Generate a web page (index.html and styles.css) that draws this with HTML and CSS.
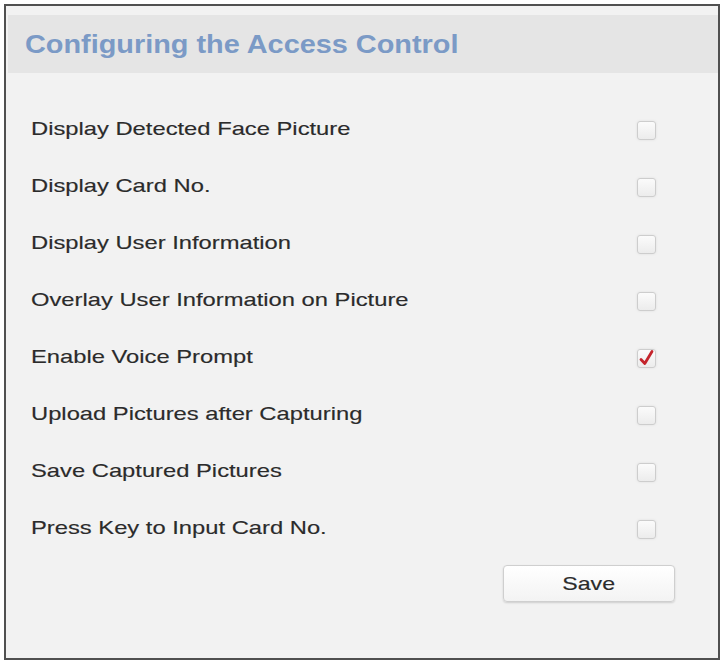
FILE: index.html
```html
<!DOCTYPE html>
<html lang="en">
<head>
    <meta charset="UTF-8">
    <meta name="viewport" content="width=device-width, initial-scale=1.0">
    <title>Configuring the Access Control</title>
    <link rel="stylesheet" href="styles.css">
</head>
<body>
    <div class="panel">
        <div class="panel-header">
            <h2>Configuring the Access Control</h2>
        </div>
        <ul class="options">
            <li class="option">
                <span class="option-label">Display Detected Face Picture</span>
                <span class="check"></span>
            </li>
            <li class="option">
                <span class="option-label">Display Card No.</span>
                <span class="check"></span>
            </li>
            <li class="option">
                <span class="option-label">Display User Information</span>
                <span class="check"></span>
            </li>
            <li class="option">
                <span class="option-label">Overlay User Information on Picture</span>
                <span class="check"></span>
            </li>
            <li class="option">
                <span class="option-label">Enable Voice Prompt</span>
                <span class="check checked">
                    <svg viewBox="0 0 19 19" width="19" height="19">
                        <path d="M4 10.5 L7.8 14.5 L15 2.5" fill="none" stroke="#c4242c" stroke-width="2.8" stroke-linecap="round" stroke-linejoin="round"/>
                    </svg>
                </span>
            </li>
            <li class="option">
                <span class="option-label">Upload Pictures after Capturing</span>
                <span class="check"></span>
            </li>
            <li class="option">
                <span class="option-label">Save Captured Pictures</span>
                <span class="check"></span>
            </li>
            <li class="option">
                <span class="option-label">Press Key to Input Card No.</span>
                <span class="check"></span>
            </li>
        </ul>
        <div class="actions">
            <button class="btn"><span class="btn-text">Save</span></button>
        </div>
    </div>
</body>
</html>
```

FILE: styles.css
```css
body {
    margin: 0;
    background-color: #fff;
    font-family: "Liberation Sans", Arial, sans-serif;
}
.panel {
    margin: 4px 3px 1px 4px;
    height: 656px;
    box-sizing: border-box;
    border: 2px solid #505050;
    background-color: #f2f2f2;
    padding: 9px 0 0 2px;
}
.panel-header {
    background-color: #e5e5e5;
    height: 58px;
    display: flex;
    align-items: center;
    padding-left: 17px;
}
.panel-header h2 {
    margin: 0;
    font-size: 26px;
    font-weight: bold;
    color: #7b9ac6;
    transform: scaleX(1.11);
    transform-origin: left center;
}
.options {
    list-style: none;
    margin: 0;
    padding: 27px 62px 0 23px;
}
.option {
    height: 57px;
    display: flex;
    align-items: center;
    justify-content: space-between;
}
.option-label {
    display: inline-block;
    font-size: 19px;
    color: #2b2b2b;
    -webkit-text-stroke: 0.15px #2b2b2b;
    transform: scaleX(1.25);
    transform-origin: left center;
}
.check {
    width: 19px;
    height: 19px;
    box-sizing: border-box;
    border: 1px solid #cdcdcd;
    border-radius: 3px;
    background: linear-gradient(#fbfbfb, #ececec);
    box-shadow: 0 0 3px rgba(0,0,0,0.08);
    margin-top: 4px;
}
.check svg {
    display: block;
    margin: -1px;
}
.actions {
    display: flex;
    justify-content: flex-end;
    padding: 9px 43px 0 0;
}
.btn {
    width: 172px;
    height: 37px;
    font-family: "Liberation Sans", Arial, sans-serif;
    font-size: 19px;
    color: #2b2b2b;
    background: linear-gradient(#ffffff, #f3f3f3);
    border: 1px solid #cfcfcf;
    border-radius: 4px;
    box-shadow: 0 1px 2px rgba(0,0,0,0.15);
}
.btn-text {
    display: inline-block;
    transform: scaleX(1.22);
    -webkit-text-stroke: 0.15px #2b2b2b;
}
```
